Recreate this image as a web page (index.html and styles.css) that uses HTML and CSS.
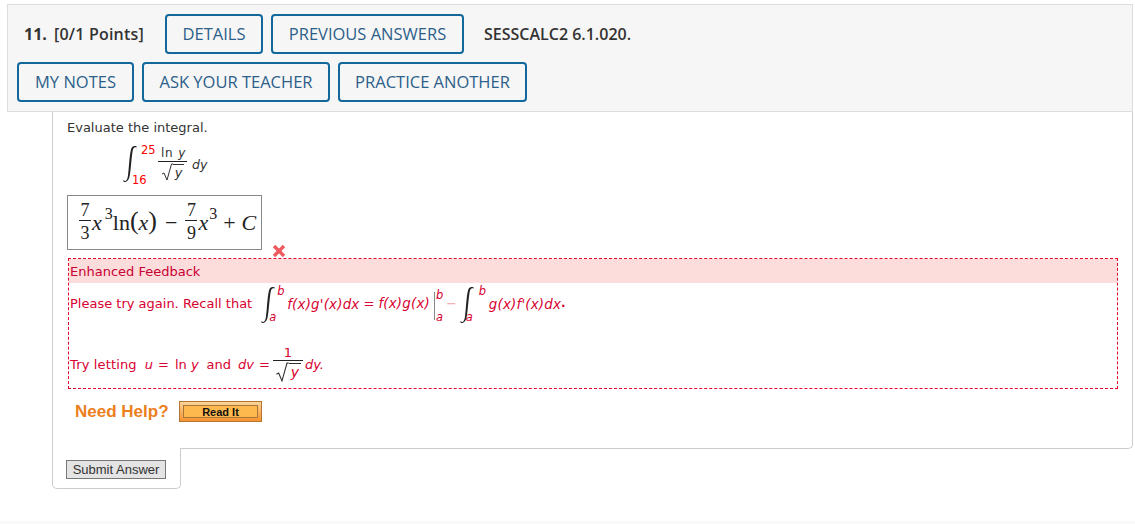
FILE: index.html
```html
<!DOCTYPE html>
<html lang="en">
<head>
<meta charset="utf-8">
<title>Question 11</title>
<link rel="stylesheet" href="styles.css">
</head>
<body>
<header class="head">
  <div class="head-row">
    <span class="qnum">11.</span>
    <span class="points">[0/1 Points]</span>
    <a class="btn btn-details">DETAILS</a>
    <a class="btn btn-prev">PREVIOUS ANSWERS</a>
    <span class="code">SESSCALC2 6.1.020.</span>
  </div>
  <div class="head-row head-row-2">
    <a class="btn btn-notes">MY NOTES</a>
    <a class="btn btn-ask">ASK YOUR TEACHER</a>
    <a class="btn btn-practice">PRACTICE ANOTHER</a>
  </div>
</header>
<main class="card">
  <p class="prompt">Evaluate the integral.</p>
  <div class="problem">
    <svg class="int" viewBox="0 0 14 37" preserveAspectRatio="none"><path d="M.3 34C2 36 3.800 35.500 4.800 31 5.800 25 6.200 12 7.800 5 8.700 1.600 10.500.2 13.700 1.400V2.400C11.200 1.500 10.200 3 9.600 6 8.400 13 7.700 26 6.500 31 5.400 35.500 2.500 37.200.3 35.200Z" fill="#222"/></svg>
    <span class="limits limits-lg"><span class="up">25</span><span class="lo">16</span></span>
    <span class="frac frac-p">
      <span class="num">ln <i>y</i></span>
      <span class="den"><svg class="rad" viewBox="0 0 12 18"><path d="M1 11l2-1 3 7L10.500 1H12" fill="none" stroke="#333" stroke-width="1"/></svg><i class="radicand">y</i></span>
    </span>
    <i class="dy">dy</i>
  </div>
  <div class="answer">
    <span class="mfrac"><span class="mnum">7</span><span class="mden">3</span></span><i>x</i><sup class="sup-a">3</sup><span class="ln">ln</span><span class="paren"><span class="pb">(</span><i>x</i><span class="pb">)</span></span><span class="op">−</span><span class="mfrac"><span class="mnum">7</span><span class="mden">9</span></span><i>x</i><sup class="sup-b">3</sup><span class="op op-plus">+</span><i>C</i>
  </div>
  <div class="mark-row">
    <svg class="xmark" viewBox="0 0 14 14"><path d="M2 2l10 10M12 2L2 12" stroke="#ee5a5f" stroke-width="3.400" fill="none"/></svg>
  </div>
  <section class="feedback">
    <div class="fb-title">Enhanced Feedback</div>
    <div class="fb-row fb-row-1">
      <span class="fb-plain">Please try again. Recall that</span>
      <svg class="int int-md" viewBox="0 0 14 37" preserveAspectRatio="none"><path d="M.3 34C2 36 3.800 35.500 4.800 31 5.800 25 6.200 12 7.800 5 8.700 1.600 10.500.2 13.700 1.400V2.400C11.200 1.500 10.200 3 9.600 6 8.400 13 7.700 26 6.500 31 5.400 35.500 2.500 37.200.3 35.200Z" fill="#222"/></svg>
      <span class="limits limits-md"><i class="up">b</i><i class="lo">a</i></span>
      <i class="expr e1">f(x)g'(x)dx</i>
      <span class="eq">=</span>
      <i class="expr">f(x)g(x)</i>
      <span class="bar"></span>
      <span class="limits limits-bar"><i class="up">b</i><i class="lo">a</i></span>
      <span class="minus">−</span>
      <svg class="int int-md int-2" viewBox="0 0 14 37" preserveAspectRatio="none"><path d="M.3 34C2 36 3.800 35.500 4.800 31 5.800 25 6.200 12 7.800 5 8.700 1.600 10.500.2 13.700 1.400V2.400C11.200 1.500 10.200 3 9.600 6 8.400 13 7.700 26 6.500 31 5.400 35.500 2.500 37.200.3 35.200Z" fill="#222"/></svg>
      <span class="limits limits-md limits-2"><i class="up">b</i><i class="lo">a</i></span>
      <i class="expr e1">g(x)f'(x)dx</i><span class="dot">.</span>
    </div>
    <div class="fb-row fb-row-2">
      <span class="fb-text">Try letting</span>
      <i class="var var-u">u</i><span class="eq eq-2">=</span><span class="plain-expr">ln <i>y</i></span>
      <span class="fb-plain fb-and">and</span>
      <i class="var var-d">dv</i><span class="eq eq-2">=</span>
      <span class="frac frac-f">
        <span class="num">1</span>
        <span class="den"><svg class="rad rad-f" viewBox="0 0 12 18"><path d="M1 11l2-1 3 7L10.500 1H12" fill="none" stroke="#333" stroke-width="1"/></svg><i class="radicand radicand-f">y</i></span>
      </span>
      <i class="var var-dy">dy.</i>
    </div>
  </section>
  <div class="help">
    <span class="help-text">Need Help?</span>
    <a class="read"><span class="read-in">Read It</span></a>
  </div>
</main>
<div class="tab"><button class="submit" type="button">Submit Answer</button></div>
<div class="foot"></div>
</body>
</html>
```
FILE: styles.css
```css
* { box-sizing: border-box; }
html, body { margin: 0; padding: 0; background: #fff; }
body { height: 524px; overflow: hidden; font-family: "DejaVu Sans", Verdana, sans-serif; font-size: 13px; color: #333; }

.head { margin: 4px 2px 0 7px; height: 108px; background: #f6f6f6; border: 1px solid #ddd; padding: 9px 0 0 9px; position: relative; z-index: 1; }
.head-row { display: flex; align-items: center; height: 40px; font-family: "Open Sans", sans-serif; }
.head-row-2 { margin-top: 8px; gap: 8px; }
.qnum { font-size: 16px; font-weight: 700; color: #333; margin-left: 7px; width: 22px; }
.points { font-size: 16px; font-weight: 600; color: #333; margin-left: 8px; width: 111px; letter-spacing: .2px; white-space: nowrap; }
.btn { display: flex; align-items: center; justify-content: center; height: 40px; padding-bottom: 2px; border: 2px solid #12679b; border-radius: 4px; color: #2c5f8a; font-size: 16.500px; background: #f6f6f6; }
.btn-details { width: 98px; }
.btn-prev { width: 193px; margin-left: 8px; }
.btn-notes { width: 117px; }
.btn-ask { width: 188px; }
.btn-practice { width: 189px; }
.code { font-size: 16px; font-weight: 600; color: #333; margin-left: 20px; }

.card { margin-left: 52px; width: 1081px; height: 337px; border: 1px solid #ccc; border-top: 0; border-radius: 0 0 5px 0; padding: 7px 0 0 14px; }
.prompt { margin: 0; height: 17px; line-height: 17px; font-size: 13px; color: #333; }

.problem { display: flex; align-items: center; height: 46px; margin-top: 5px; padding-left: 56px; }
.int { display: block; flex: none; width: 14px; height: 38px; }
.limits { display: flex; flex-direction: column; justify-content: space-between; flex: none; }
.limits-lg { height: 43px; width: 17px; margin-left: 4px; padding-top: 2px; font-size: 11.500px; line-height: 11px; color: #f00; }
.limits-lg .lo { margin-left: -9px; }
.frac { display: inline-flex; flex-direction: column; align-items: center; flex: none; }
.frac-p { width: 29px; font-size: 12px; color: #333; margin-top: -2px; }
.frac-p .num { line-height: 16px; height: 17px; border-bottom: 1px solid #222; width: 100%; text-align: center; white-space: nowrap; letter-spacing: .8px; padding-left: 2px; }
.den { display: flex; align-items: flex-start; justify-content: center; }
.rad { width: 12px; height: 18px; display: block; flex: none; margin-top: 1px; }
.radicand { border-top: 1px solid #333; padding: 0 2px; line-height: 15px; margin-top: 2px; font-size: 13px; }
.dy { font-size: 12.500px; margin-left: 5px; margin-top: 1px; }

.answer { display: flex; align-items: center; width: 195px; height: 55px; margin-top: 8px; border: 1px solid #888; padding-left: 10px; font-family: "Liberation Serif", serif; font-size: 22px; color: #222; white-space: nowrap; }
.answer sup { font-size: 16px; line-height: 1; align-self: flex-start; margin-top: 10px; }
.sup-a { margin-left: 3px; }
.sup-b { margin-left: 1px; }
.mfrac { display: inline-flex; flex-direction: column; align-items: center; width: 14px; font-size: 18px; line-height: 18px; margin-top: -2px; }
.mnum { border-bottom: 1px solid #222; width: 12px; text-align: center; height: 20px; margin-bottom: 3px; }
.mden { height: 18px; }
.paren { display: flex; align-items: center; margin-left: 0; }
.pb { font-size: 26px; line-height: 1; margin-top: -3px; }
.op { margin: 0 7px 0 8px; }
.op-plus { margin: 0 6px; }

.mark-row { display: flex; height: 8px; padding-left: 205px; }
.xmark { display: block; flex: none; width: 14px; height: 14px; margin-top: -6px; position: relative; z-index: 1; }

.feedback { width: 1050px; height: 131px; margin-left: 1px; border: 1px dashed #e0002a; color: #d8002f; }
.fb-title { height: 24px; line-height: 25px; background: #fddcdc; padding-left: 1px; color: #c80032; font-size: 13px; }
.fb-row { display: flex; align-items: center; padding-left: 1px; white-space: nowrap; }
.fb-row-1 { height: 40px; }
.fb-row-2 { height: 40px; margin-top: 21px; }
.fb-plain { color: #d8002f; }
.fb-text { color: #d8002f; letter-spacing: .15px; }
.int-md { margin-left: 9px; margin-top: 3px; }
.int-2 { margin-left: 0; }
.limits-md { height: 37px; width: 10px; margin-left: 2px; margin-top: 3px; font-size: 11.500px; line-height: 11px; }
.limits-md .lo { margin-left: -8px; }
.limits-2 { width: 10px; margin-left: 5px; }
.limits-2 .lo { margin-left: -13px; }
.expr { font-size: 13.400px; letter-spacing: .2px; }
.e1 { margin-top: 2px; }
.eq { margin: 0 4px; font-size: 13px; }
.bar { width: 1px; height: 28px; background: #888; margin-left: 4px; margin-top: 5px; }
.limits-bar { height: 33px; width: 9px; margin-left: 1px; margin-top: 7px; font-size: 11.500px; line-height: 11px; }
.minus { color: #f0a0a0; margin: 0 3px 0 1px; font-size: 13px; }
.dot { font-weight: 700; font-size: 12px; }
.var { font-size: 13px; }
.var-u { margin-left: 8px; }
.var-d { margin-left: 7px; }
.var-dy { margin-left: 2px; }
.eq-2 { margin: 0 5px; }
.plain-expr { font-size: 13px; margin-left: 1px; }
.fb-and { margin-left: 8px; }
.frac-f { width: 30px; font-size: 13px; color: #d8002f; margin: -2px 0 0 -2px; }
.frac-f .num { border-bottom: 1px solid #222; width: 100%; text-align: center; height: 17px; line-height: 17px; }
.rad-f { width: 14px; height: 20px; }
.radicand-f { font-size: 14px; line-height: 17px; }

.help { display: flex; align-items: center; height: 21px; margin-top: 12px; padding-left: 8px; }
.help-text { font-family: "Liberation Sans", Arial, sans-serif; font-size: 17px; font-weight: 700; color: #ec7f1c; width: 104px; }
.read { display: block; width: 83px; height: 21px; padding: 3px; background: linear-gradient(#fbd39a, #f7932e); border: 1px solid #b5752e; }
.read-in { display: flex; align-items: center; justify-content: center; height: 100%; background: #fdb94d; border: 1px solid #a87635; font-family: "Liberation Sans", Arial, sans-serif; font-size: 11px; font-weight: 700; color: #111; }

.tab { margin: -1px 0 0 52px; width: 129px; height: 41px; background: #fff; border: 1px solid #ccc; border-top: 0; border-radius: 0 0 5px 5px; padding: 12px 0 0 13px; position: relative; }
.submit { display: block; width: 100px; height: 19px; padding: 0; background: #e4e4e4; border: 1px solid #777; border-radius: 0; font-family: "Liberation Sans", Arial, sans-serif; font-size: 13px; color: #333; }
.foot { height: 3px; margin-top: 32px; background: #f9f9f9; }
```
